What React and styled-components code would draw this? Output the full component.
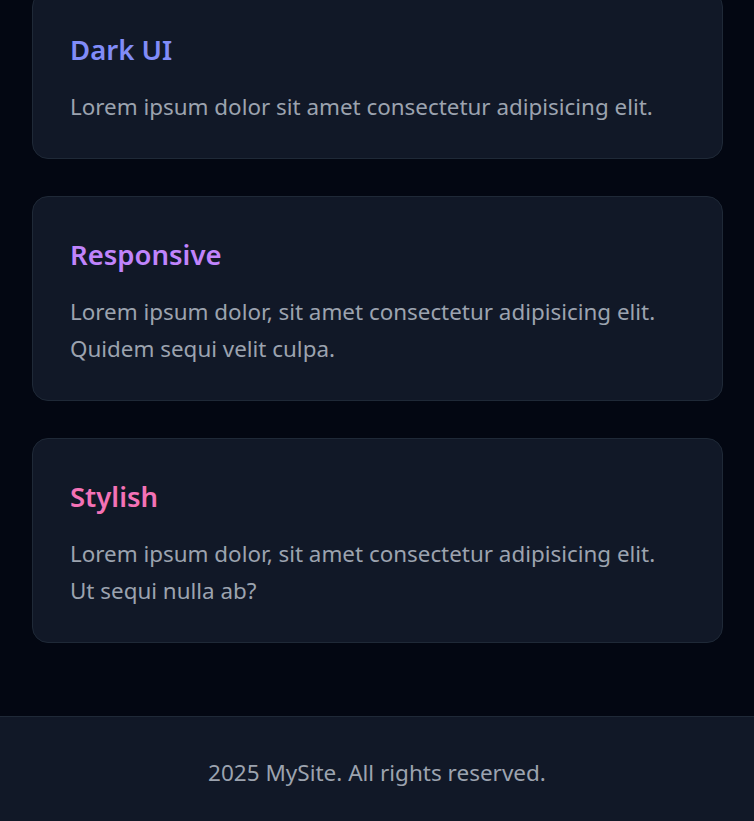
import React from 'react';
import styled, { createGlobalStyle } from 'styled-components';

const GlobalStyle = createGlobalStyle`
  html, body {
    margin: 0;
    padding: 0;
    background: #030712;
    overflow: hidden;
  }
  * {
    box-sizing: border-box;
  }
  body {
    font-family: "Noto Sans", "Open Sans", sans-serif;
  }
`;

const Page = styled.div`
  display: flex;
  flex-direction: column;
  min-height: 821px;
  background: #030712;
`;

const Main = styled.main`
  display: flex;
  flex-direction: column;
  gap: 37px;
  margin-top: -9px;
  padding: 0 31px 73px 32px;
`;

const Card = styled.section`
  background: #111827;
  border: 1px solid #1f2937;
  border-radius: 16px;
  padding: 38px 44px 33px 37px;
`;

const Title = styled.h2`
  margin: 0 0 18px;
  font-size: 27.5px;
  line-height: 40px;
  font-weight: 600;
  color: ${(p) => p.color};
`;

const Text = styled.p`
  margin: 0;
  font-size: 22.4px;
  line-height: 37px;
  color: #9ca3af;
`;

const Footer = styled.footer`
  background: #111827;
  border-top: 1px solid #1f2937;
  padding: 40px 16px 32px;
  text-align: center;
  font-size: 22.5px;
  line-height: 32px;
  color: #9ca3af;
`;

const cards = [
  {
    title: 'Dark UI',
    color: '#818cf8',
    text: 'Lorem ipsum dolor sit amet consectetur adipisicing elit.',
  },
  {
    title: 'Responsive',
    color: '#c084fc',
    text: 'Lorem ipsum dolor, sit amet consectetur adipisicing elit. Quidem sequi velit culpa.',
  },
  {
    title: 'Stylish',
    color: '#f472b6',
    text: 'Lorem ipsum dolor, sit amet consectetur adipisicing elit. Ut sequi nulla ab?',
  },
];

const App = () => {
  return (
    <>
      <GlobalStyle />
      <Page>
        <Main>
          {cards.map((c) => (
            <Card key={c.title}>
              <Title color={c.color}>{c.title}</Title>
              <Text>{c.text}</Text>
            </Card>
          ))}
        </Main>
        <Footer>2025 MySite. All rights reserved.</Footer>
      </Page>
    </>
  );
};

export default App;
